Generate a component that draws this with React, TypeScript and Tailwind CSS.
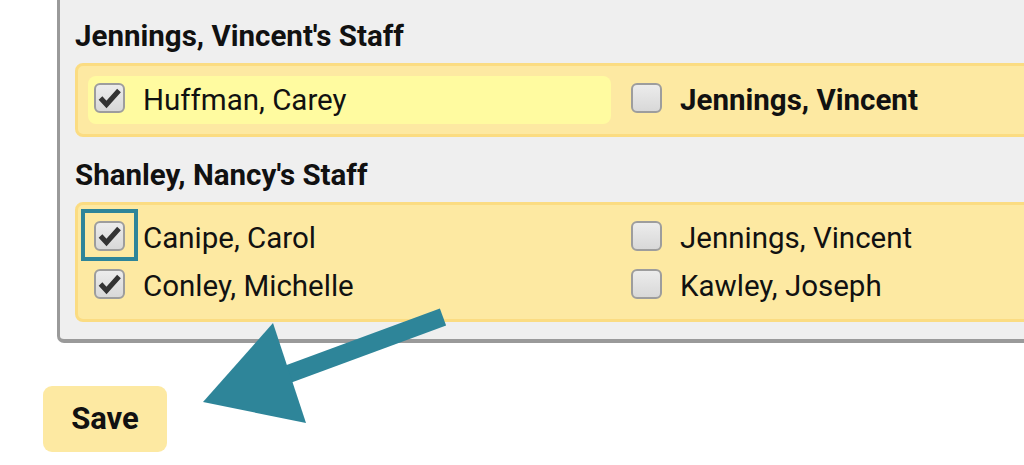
import React from "react";

type Person = { name: string; checked: boolean; bold?: boolean; highlight?: boolean; focus?: boolean };

const Check = ({ checked, focus }: { checked: boolean; focus?: boolean }) => (
  <span className="relative mb-[5px] flex h-[30px] w-[31px] shrink-0 items-center justify-center rounded-[6px] border-2 border-[#9d9d9d] bg-gradient-to-b from-[#ececec] to-[#d8d8d8]">
    {checked && (
      <svg width="24" height="22" viewBox="0 0 24 22">
        <path d="M2.5 11 L8.5 17.5 L21 3.5" fill="none" stroke="#333333" strokeWidth="5" />
      </svg>
    )}
    {focus && (
      <span className="absolute left-[-15px] top-[-14px] h-[52px] w-[57px] border-4 border-[#2e8599]" />
    )}
  </span>
);

const Item = ({ p }: { p: Person }) => (
  <label
    className={
      "flex h-[48px] items-center gap-[18px] rounded-[8px] px-[6px] " +
      (p.highlight ? "bg-[#fffba0]" : "")
    }
  >
    <Check checked={p.checked} focus={p.focus} />
    <span className={"text-[29.5px] text-[#111] " + (p.bold ? "font-bold" : "")}>{p.name}</span>
  </label>
);

const Group = ({ title, cols, first }: { title: string; cols: Person[][]; first?: boolean }) => (
  <div>
    <h2
      className={
        "text-[29.5px] font-bold leading-[28px] text-[#111] " +
        (first ? "mb-[13px]" : "mt-[24px] mb-[13px]")
      }
    >
      {title}
    </h2>
    <div
      className={
        "rounded-[8px] border-[3px] border-[#fbdc82] bg-[#fde9a2] pl-[10px] " +
        (first ? "py-[10px]" : "py-[9px]")
      }
    >
      <div className="grid grid-cols-[523px_523px] gap-x-[14px]">
        {cols.map((col, i) => (
          <div key={i} className="flex flex-col">
            {col.map((p) => (
              <Item key={p.name} p={p} />
            ))}
          </div>
        ))}
      </div>
    </div>
  </div>
);

export default function App() {
  return (
    <div className="relative h-[465px] w-[1024px] overflow-hidden bg-white font-['Roboto',sans-serif]">
      <div className="ml-[57px] w-[1100px] rounded-b-[7px] border-b-[4px] border-l-[3px] border-[#9a9a9a] bg-[#efefef] pl-[15px] pt-[22px] pb-[17px]">
        <Group
          first
          title="Jennings, Vincent's Staff"
          cols={[
            [{ name: "Huffman, Carey", checked: true, highlight: true }],
            [{ name: "Jennings, Vincent", checked: false, bold: true }],
          ]}
        />
        <Group
          title="Shanley, Nancy's Staff"
          cols={[
            [
              { name: "Canipe, Carol", checked: true, focus: true },
              { name: "Conley, Michelle", checked: true },
            ],
            [
              { name: "Jennings, Vincent", checked: false },
              { name: "Kawley, Joseph", checked: false },
            ],
          ]}
        />
      </div>

      <div className="ml-[43px] mt-[43px] flex">
        <button className="h-[66px] w-[124px] rounded-[9px] bg-[#fde9a2] text-[31px] font-bold text-[#111]">
          Save
        </button>
      </div>

      <svg className="pointer-events-none absolute left-0 top-0" width="1024" height="465" viewBox="0 0 1024 465">
        <line x1="283" y1="376" x2="443" y2="317" stroke="#2e8599" strokeWidth="18" />
        <polygon points="203,402 273,323 306,423" fill="#2e8599" />
      </svg>
    </div>
  );
}
